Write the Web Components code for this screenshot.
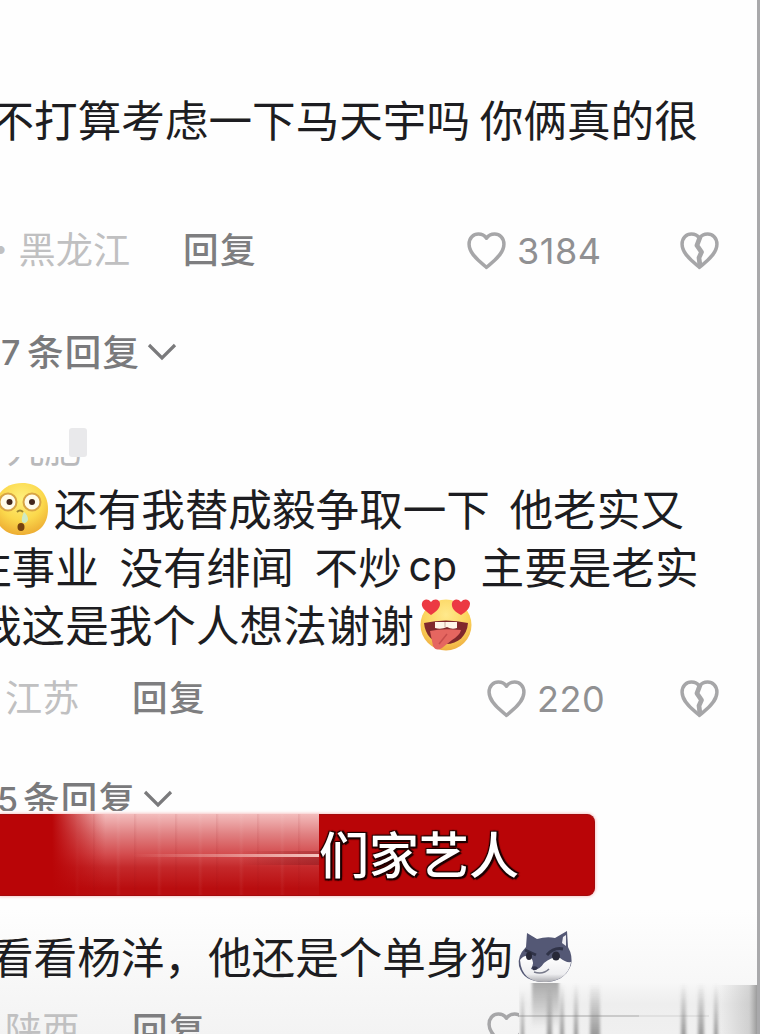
<!DOCTYPE html>
<html lang="zh-CN">
<head>
<meta charset="utf-8">
<title>评论</title>
<style>
  body {
    margin: 0;
    background: #fefefe;
    font-family: "Noto Sans CJK SC", sans-serif;
    color: #1d1d21;
  }
</style>
</head>
<body>
<comment-screen>
  <comment-text style="margin-top: 91px">
    <text-line style="--start: -9.5px">不打算考虑一下马天宇吗 你俩真的很</text-line>
  </comment-text>
  <comment-meta place="· 黑龙江" likes="3184" style="margin-top: 70px; --place: -18px; --reply: 183px; --like: 466px"></comment-meta>
  <reply-toggle count="7" style="margin-top: 42px; --start: 1px"></reply-toggle>

  <masked-name style="margin-top: 46px">九肥</masked-name>
  <comment-text style="margin-top: 12px">
    <text-line style="--start: -4px"><emoji-face name="dazed"></emoji-face>还有我替成毅争取一下  他老实又</text-line>
    <text-line style="--start: -32px; word-spacing: .6px">注事业  没有绯闻  不炒<span class="latin">cp</span>  主要是老实</text-line>
    <text-line style="--start: -22px">我这是我个人想法谢谢<emoji-face name="love"></emoji-face></text-line>
  </comment-text>
  <comment-meta place="江苏" likes="220" style="margin-top: 13px; --place: 5px; --reply: 132px; --like: 486px"></comment-meta>
  <reply-toggle count="5" style="margin-top: 41px; height: 43px; --start: -3px"></reply-toggle>

  <caption-banner style="margin-top: 3px">们家艺人</caption-banner>

  <comment-text style="margin-top: 32px">
    <text-line style="--start: -10px">看看杨洋，他还是个单身狗<emoji-face name="husky"></emoji-face></text-line>
  </comment-text>
  <comment-meta place="陕西" style="margin-top: 14px; --place: 5px; --reply: 132px; --like: 486px"></comment-meta>
  <edge-smear slot="overlay"></edge-smear>
</comment-screen>

<script>
function define(name, html, setup) {
  const template = document.createElement('template');
  template.innerHTML = html;

  customElements.define(name, class extends HTMLElement {
    constructor() {
      super();
      this.attachShadow({ mode: 'open' });
      this.shadowRoot.appendChild(template.content.cloneNode(true));
      if (setup) setup(this, this.shadowRoot);
    }
  });
}

define('comment-screen', `
  <style>
    :host {
      display: block;
      position: relative;
      box-sizing: border-box;
      width: 760px;
      height: 1034px;
      overflow: hidden;
      border-right: 3px solid #a9a9ab;
      background: linear-gradient(#fefefe 910px, #f8f8f8 975px, #f3f3f3 1034px);
    }
    main { display: flex; flex-direction: column; }
  </style>
  <main><slot></slot></main>
  <slot name="overlay"></slot>
`);

define('comment-text', `
  <style>
    :host { display: flex; flex-direction: column; flex: none; }
  </style>
  <slot></slot>
`);

define('text-line', `
  <style>
    :host {
      display: flex;
      align-items: center;
      box-sizing: border-box;
      height: 58px;
      padding-bottom: 5px;
      margin-left: var(--start, 0);
      white-space: pre;
      font-size: 43.6px;
      line-height: 54px;
    }
    ::slotted(.latin) {
      width: 54px;
      margin: 3px 0 0 4px;
      text-align: center;
      font-family: Inter, sans-serif;
      font-size: 41px;
    }
  </style>
  <slot></slot>
`);

const HEART = 'M20 35.5C17 32.4 3 23.5 3 12.8C3 6.6 7.2 3 12 3C15.4 3 18.3 4.5 20 7C21.7 4.5 24.6 3 28 3C32.8 3 37 6.6 37 12.8C37 23.5 23 32.4 20 35.5Z';

define('comment-meta', `
  <style>
    :host {
      display: grid;
      grid-template-columns: var(--reply) minmax(0, 1fr) 156px;
      align-items: center;
      flex: none;
      height: 60px;
      line-height: 60px;
      white-space: nowrap;
      color: #7e7e80;
    }
    .place { padding-bottom: 4px; margin-left: var(--place); font-size: 37.2px; line-height: 56px; word-spacing: -9px; color: #c0c0c1; }
    .cell { display: grid; grid-template-columns: 0 1fr; align-items: center; }
    .reply { padding-bottom: 4px; font-size: 35.6px; line-height: 56px; letter-spacing: 1.4px; font-weight: 500; }
    .like {
      display: flex;
      align-items: center;
      gap: 10px;
      margin-left: calc(var(--like) - var(--reply));
      font-family: Inter, sans-serif;
      font-size: 36px;
      letter-spacing: .5px;
      color: #909092;
    }
    .like span { padding-top: 2px; }
    .dislike { display: flex; padding-left: 78px; }
    svg { flex: none; width: 41px; height: 39px; fill: none; stroke: #a6a6a8; stroke-width: 3.4; stroke-linejoin: round; }
  </style>
  <span class="place"></span>
  <div class="cell">
    <span class="reply">回复</span>
    <span class="like"><svg viewBox="0 0 40 38"><path d="${HEART}"/></svg><span></span></span>
  </div>
  <span class="dislike"><svg viewBox="0 0 40 38"><path d="${HEART}"/><path d="M20.5 6L17.5 14L22 20.5L19.5 26L20.5 34" stroke-width="4.6"/></svg></span>
`, (host, root) => {
  root.querySelector('.place').textContent = host.getAttribute('place');
  root.querySelector('.like span').textContent = host.getAttribute('likes') || '';
});

define('reply-toggle', `
  <style>
    :host {
      display: flex;
      flex: none;
      align-items: flex-start;
      height: 60px;
      overflow: hidden;
      font-size: 36.5px;
      letter-spacing: 1.3px;
      font-weight: 500;
      line-height: 60px;
      color: #7a7a7c;
    }
    .count { width: 26px; padding-top: 2px; margin-left: var(--start); font-family: Inter, sans-serif; font-size: 34px; }
    svg { width: 30px; height: 18px; margin: 22px 0 0 7px; fill: none; stroke: currentColor; stroke-width: 3.2; }
  </style>
  <span class="count"></span><span>条回复</span>
  <svg viewBox="0 0 30 18"><path d="M2 2L15 15L28 2"/></svg>
`, (host, root) => {
  root.querySelector('.count').textContent = host.getAttribute('count');
});

// only the lower edge of the name shows from under the cover
define('masked-name', `
  <style>
    :host {
      display: block;
      position: relative;
      flex: none;
      height: 41px;
      overflow: hidden;
      padding-left: 7px;
      font-size: 37px;
      line-height: 40px;
      color: #b9b9bb;
    }
    i { position: absolute; left: 0; top: 0; width: 100px; height: 30px; background: #fefefe; }
    b { position: absolute; left: 69px; top: 1px; width: 18px; height: 29px; border-radius: 3px; background: #e9e9eb; }
  </style>
  <slot></slot><i></i><b></b>
`);

const faces = {
  dazed: `
    <radialGradient id="g" cx=".5" cy=".3" r=".75"><stop offset="0" stop-color="#fff07c"/><stop offset=".55" stop-color="#fbd84c"/><stop offset="1" stop-color="#eba62f"/></radialGradient>
    <path d="M27 2C43 2 53 12 53 28C53 45 42 54 26 54C10 54 0 44 0 29C0 12 11 2 27 2Z" fill="url(#g)"/>
    <g fill="#fffbe9" stroke="#d8a444" stroke-width="2"><circle cx="13" cy="21" r="8.5"/><circle cx="37" cy="21" r="8.5"/></g>
    <g fill="#43261b"><circle cx="14.5" cy="21" r="3"/><circle cx="37" cy="21" r="3"/></g>
    <path d="M22 31Q25 28 28 31" fill="none" stroke="#9b8430" stroke-width="2"/>
    <path d="M29 31Q33 34 33 39Q31 44 27 41Q26 37 29 31Z" fill="#cfeac2"/>
    <ellipse cx="26" cy="46" rx="3.5" ry="4" fill="#764210"/>`,
  love: `
    <radialGradient id="g" cx=".5" cy=".3" r=".75"><stop offset="0" stop-color="#ffe98c"/><stop offset=".6" stop-color="#fbd35b"/><stop offset="1" stop-color="#eca83d"/></radialGradient>
    <circle cx="28" cy="28" r="25.5" fill="url(#g)"/>
    <g fill="#ec3943"><path d="M13 18C6 13 3 10 4 6C5 2 10 1 13 5C16 1 22 2 22 7C22 11 18 15 13 18Z"/><path d="M43 18C37 15 33 11 34 6C35 2 40 1 43 5C46 1 51 2 52 6C52 11 49 14 43 18Z"/></g>
    <path d="M6 26Q28 21 50 26C49 39 40 47 28 47C15 47 7 38 6 26Z" fill="#80282c"/>
    <path d="M17 25H39V31Q34 33 29 30Q23 33 17 31Z" fill="#fff5e9"/>
    <path d="M27 25V30" stroke="#c5a79b"/>
    <path d="M12 34Q24 31 43 33Q42 38 34 43L24 51Q18 55 15 49Z" fill="#e56660"/>
    <path d="M29 37L21 47" stroke="#c74c4b" stroke-width="1.5"/>`,
  husky: `
    <linearGradient id="g" x1="0" y1="0" x2="0" y2="1"><stop offset="0" stop-color="#fff"/><stop offset=".7" stop-color="#eeeef0"/><stop offset="1" stop-color="#a9a9ae"/></linearGradient>
    <path d="M10 4L20 10Q30 7 38 9L50 2L51 18Q56 27 54 36C49 49 39 53 27 53C14 53 5 48 2 37Q0 27 9 18Z" fill="#545875"/>
    <path d="M46 8L49 6L49 17L45 14Z" fill="#eeeef3"/>
    <path d="M3 31Q8 24 14 29Q18 33 14 40Q21 43 27 34Q37 26 43 29Q49 34 54 33C52 47 40 53 27 53C13 53 4 46 3 31Z" fill="url(#g)"/>
    <path d="M8 21L19 26M30 26Q37 18 46 20" fill="none" stroke="#303348" stroke-width="3"/>
    <g fill="#272837"><ellipse cx="12" cy="27" rx="3" ry="4"/><ellipse cx="39" cy="27" rx="4" ry="4.5"/></g>
    <path d="M15 38Q19 36 21 39Q19 42 16 41Z" fill="#30334a"/>
    <path d="M17 43Q26 46 32 40" fill="none" stroke="#77798a" stroke-width="1.6"/>`
};

define('emoji-face', `
  <style>
    :host { display: block; flex: none; width: 56px; height: 56px; margin: 5px 1px 0 4px; white-space: normal; }
    :host([name="dazed"]) { margin: 5px 2px 0 -1px; width: 57px; }
    svg { display: block; width: 56px; height: 56px; }
  </style>
  <svg viewBox="0 0 56 56"></svg>
`, (host, root) => {
  root.querySelector('svg').innerHTML = faces[host.getAttribute('name')];
});

define('caption-banner', `
  <style>
    :host {
      display: flex;
      flex: none;
      align-items: flex-start;
      box-sizing: border-box;
      width: 595px;
      height: 82px;
      border-radius: 0 8px 8px 0;
      border: 1px solid #a40a0c;
      border-left: 0;
      background: #b90507;
      box-shadow: 0 0 3px 1px #f8caca;
      color: #fff;
      font-size: 50px;
      font-weight: 500;
      line-height: 74px;
      text-shadow: 2px 2px 1px #1b0000, -1px -1px 1px #1b0000, 2px -1px 1px #1b0000, -1px 2px 1px #1b0000;
    }
    .smear {
      align-self: stretch;
      width: 267px;
      margin: -1px 0 0 52px;
      background:
        linear-gradient(90deg, #b90507, #b9050700 20%),
        linear-gradient(90deg, #f5c4bf00 30%, #f5c4bf) 0 40px / 100% 3px no-repeat,
        linear-gradient(90deg, #7d131900 70%, #7d131960) 0 37px / 100% 3px no-repeat,
        linear-gradient(90deg, #7d131900 70%, #7d131970) 0 43px / 100% 8px no-repeat,
        repeating-linear-gradient(90deg, #8d0a1114 0 1px, #8d0a1100 3px 23px, #ffffff0c 25px, #ffffff00 28px 41px),
        linear-gradient(#f3bcbc, #e08081 25%, #d34b4d 50%, #c4282a 66%, #b90d0f 92%);
    }
  </style>
  <div class="smear"></div><slot></slot>
`);

// vertical streaks lying over the lower right corner
define('edge-smear', `
  <style>
    :host { display: block; position: absolute; left: 519px; top: 983px; width: 238px; height: 51px; }
    svg { display: block; }
  </style>
  <svg width="238" height="51" viewBox="0 0 238 51">
    <defs>
      <linearGradient id="down" x1="0" y1="0" x2="0" y2="1"><stop offset="0" stop-color="#777" stop-opacity="0"/><stop offset="1" stop-color="#777" stop-opacity=".75"/></linearGradient>
      <linearGradient id="up" x1="0" y1="0" x2="0" y2="1"><stop offset="0" stop-color="#777" stop-opacity=".6"/><stop offset="1" stop-color="#777" stop-opacity="0"/></linearGradient>
      <linearGradient id="side"><stop offset="0" stop-color="#888" stop-opacity="0"/><stop offset=".8" stop-color="#888" stop-opacity=".3"/><stop offset="1" stop-color="#777" stop-opacity=".7"/></linearGradient>
      <linearGradient id="base" x1="0" y1="0" x2="0" y2="1"><stop offset="0" stop-color="#f7f7f7"/><stop offset=".4" stop-color="#eee"/><stop offset="1" stop-color="#f0f0f0"/></linearGradient>
      <filter id="soft"><feGaussianBlur stdDeviation="1.6 .5"/></filter>
    </defs>
    <rect width="238" height="51" fill="url(#base)"/>
    <path d="M0 33H120" stroke="#cacaca" stroke-width="2"/>
    <path d="M120 33H190" stroke="#e0e0e0" stroke-width="2"/>
    <g filter="url(#soft)">
      <rect x="13" width="27" height="45" fill="url(#up)"/>
      <g fill="url(#down)">
        <rect x="2" y="8" width="3" height="46"/><rect x="28" y="4" width="5" height="50"/><rect x="41" width="4" height="54"/>
        <rect x="55" width="4" height="54"/><rect x="71" width="10" height="54"/>
        <rect x="162" width="5" height="54"/><rect x="179" width="6" height="54"/><rect x="195" width="4" height="54"/>
      </g>
    </g>
    <rect x="198" y="2" width="40" height="49" fill="url(#side)"/>
  </svg>
`);
</script>
</body>
</html>
